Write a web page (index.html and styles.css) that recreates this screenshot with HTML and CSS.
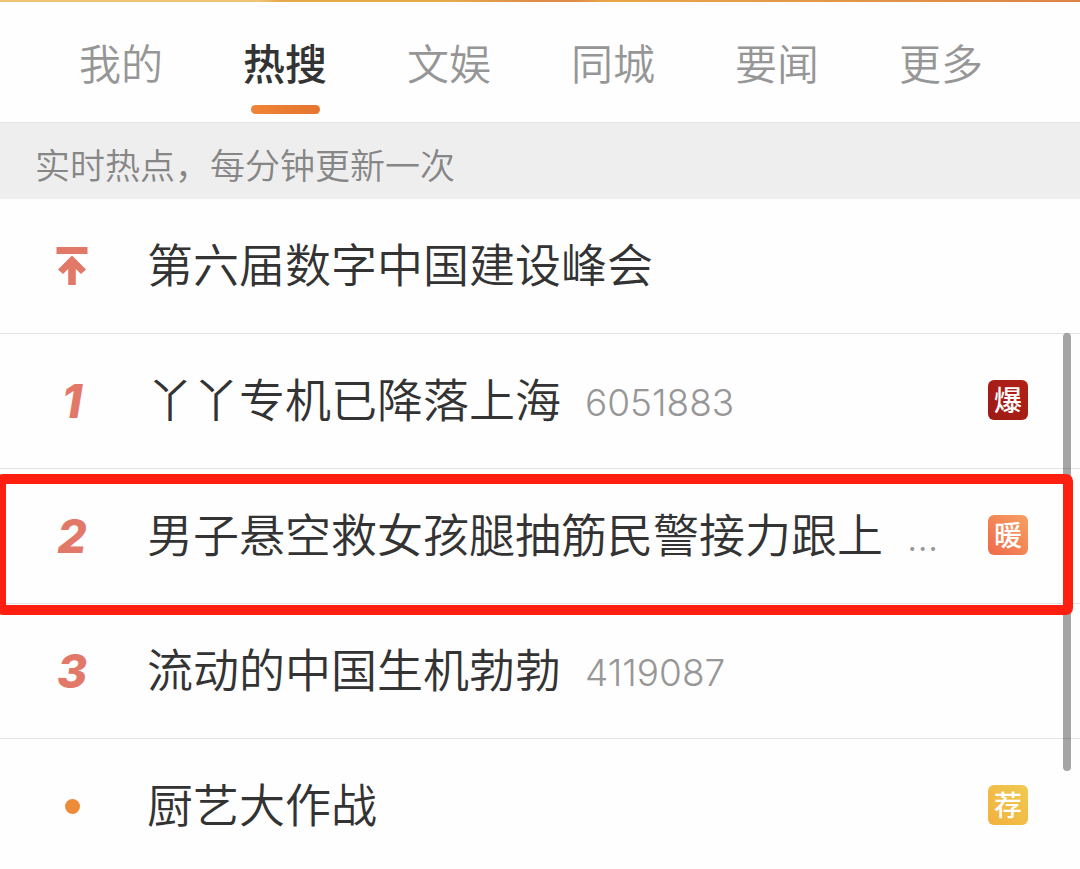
FILE: index.html
```html
<!DOCTYPE html>
<html lang="zh-CN">
<head>
<meta charset="utf-8">
<meta name="viewport" content="width=device-width, initial-scale=1">
<title>热搜</title>
<link rel="stylesheet" href="styles.css">
</head>
<body>
<header class="top">
  <nav class="tabs">
    <button class="tab" type="button">我的</button>
    <button class="tab tab-active" type="button" aria-current="page">热搜</button>
    <button class="tab" type="button">文娱</button>
    <button class="tab" type="button">同城</button>
    <button class="tab" type="button">要闻</button>
    <button class="tab" type="button">更多</button>
  </nav>
</header>
<main>
  <p class="notice">实时热点，每分钟更新一次</p>
  <div class="board">
    <ol class="list">
      <li class="row">
        <span class="rank">
          <svg class="pin" viewBox="0 0 32 40" aria-hidden="true">
            <path d="M0.500 1H31.500V8H0.500Z M16 9.500L30 23.500L25 28L19.800 23V39H12.200V23L7 28L2 23.500Z"/>
          </svg>
        </span>
        <a class="title" href="#">第六届数字中国建设峰会</a>
      </li>
      <li class="row">
        <span class="rank">1</span>
        <a class="title" href="#">丫丫专机已降落上海</a>
        <span class="count">6051883</span>
        <span class="badge badge-hot">爆</span>
      </li>
      <li class="row row-marked">
        <span class="rank">2</span>
        <a class="title" href="#">男子悬空救女孩腿抽筋民警接力跟上</a>
        <span class="count">…</span>
        <span class="badge badge-warm">暖</span>
      </li>
      <li class="row">
        <span class="rank">3</span>
        <a class="title" href="#">流动的中国生机勃勃</a>
        <span class="count">4119087</span>
      </li>
      <li class="row">
        <span class="rank"><span class="dot"></span></span>
        <a class="title" href="#">厨艺大作战</a>
        <span class="badge badge-pick">荐</span>
      </li>
    </ol>
    <div class="scrollbar"></div>
  </div>
</main>
</body>
</html>
```
FILE: styles.css
```css
* {
  box-sizing: border-box;
}

body {
  margin: 0;
  background: #fefefe;
  color: #333;
  font-family: Inter, "Noto Sans CJK SC", sans-serif;
  overflow-x: hidden;
}

.top {
  border-top: 2px solid;
  border-image: linear-gradient(90deg, #efc475 0, #efc475 24%, #e5a94a 26%, #e5a94a 42%, #de8a48 50%, #de8a48 53%, #e9a647 56%, #e19548 80%, #dc8248 100%) 1;
  border-image-width: 2px 0 0;
}

.tabs {
  display: flex;
  padding: 0 57px 0 39px;
}

.tab {
  position: relative;
  flex: 1;
  height: 120px;
  padding: 0;
  border: 0;
  background: none;
  color: #969696;
  font-family: "Noto Sans CJK SC", sans-serif;
  font-size: 42px;
  font-weight: 350;
  line-height: 120px;
}

.tab-active {
  color: #333;
  font-weight: 500;
}

.tab-active::after {
  content: "";
  position: absolute;
  bottom: 8px;
  left: 50%;
  width: 69px;
  height: 9px;
  margin-left: -34px;
  border-radius: 5px;
  background: linear-gradient(90deg, #f08436, #e5742e);
}

.notice {
  margin: 0;
  padding: 7px 35px 1px;
  border-top: 1px solid #e4e4e4;
  background: #eee;
  color: #868686;
  font-family: "Noto Sans CJK SC", sans-serif;
  font-size: 35px;
  font-weight: 350;
  line-height: 68px;
}

.board {
  position: relative;
}

.list {
  margin: 0;
  padding: 0;
  list-style: none;
}

.row {
  position: relative;
  display: flex;
  align-items: center;
  padding: 33px 52px 33px 0;
  border-bottom: 1px solid #e3e3e3;
}

.row:last-child {
  padding-bottom: 28px;
  border-bottom: 0;
}

.rank {
  display: flex;
  flex: none;
  align-items: center;
  justify-content: center;
  width: 147px;
  height: 68px;
  padding-right: 3px;
  color: #e27868;
  font-size: 46px;
  font-style: italic;
  font-weight: 800;
}

.pin {
  width: 32px;
  height: 40px;
  fill: #e27868;
}

.dot {
  width: 15px;
  height: 15px;
  border-radius: 50%;
  background: #ee8b39;
}

.title {
  padding-bottom: 8px;
  color: #333;
  font-family: "Noto Sans CJK SC", sans-serif;
  font-size: 46px;
  font-weight: 350;
  line-height: 60px;
  text-decoration: none;
  white-space: nowrap;
}

.count {
  padding-top: 4px;
  margin-left: 24px;
  color: #979797;
  font-size: 37px;
  font-weight: 300;
  line-height: 60px;
}

.badge {
  flex: none;
  width: 40px;
  height: 40px;
  margin-bottom: 2px;
  margin-left: auto;
  border-radius: 6px;
  color: #fff;
  font-family: "Noto Sans CJK SC", sans-serif;
  font-size: 28px;
  font-weight: 500;
  line-height: 38px;
  text-align: center;
}

.badge-hot {
  background: linear-gradient(45deg, #9c1a14, #b32018);
}

.badge-warm {
  background: linear-gradient(45deg, #ee6a49, #f7a063);
}

.badge-pick {
  background: linear-gradient(45deg, #f2b13c, #f0ca52);
}

.row-marked::after {
  content: "";
  position: absolute;
  z-index: 2;
  top: 5px;
  right: 7px;
  bottom: -12px;
  left: -4px;
  border: 10px solid #ff1f11;
  border-radius: 7px;
  pointer-events: none;
}

.scrollbar {
  position: absolute;
  z-index: 1;
  top: 134px;
  right: 9px;
  width: 8px;
  height: 438px;
  border-radius: 4px;
  background: rgba(0, 0, 0, 0.35);
}
```
